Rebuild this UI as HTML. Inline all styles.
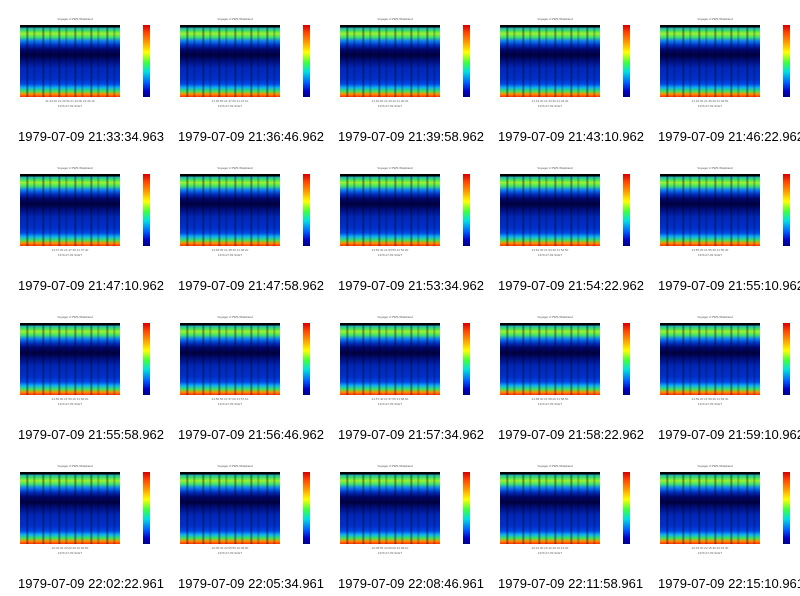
<!DOCTYPE html>
<html><head><meta charset="utf-8"><style>
body{margin:0;width:800px;height:596px;background:#fff;position:relative;overflow:hidden;font-family:"Liberation Sans",sans-serif}
.c{position:absolute;width:160px;height:149px}
.t{position:absolute;left:40px;top:17px;font-size:3px;color:#555;width:70px;text-align:center}
.p{position:absolute;left:20px;top:25px;width:100px;height:72px;
background:linear-gradient(to bottom,#000 0,#000 3%,#20b0c0 4%,#40e060 8%,#a0f030 12%,#40e070 17%,#1080f0 22%,#0030c0 28%,#000870 34%,#000040 42%,#001080 50%,#0028b8 60%,#0030c8 75%,#0048e8 82%,#10b0f0 87%,#40e060 92%,#ff9000 96%,#ff3000 100%)}
.s{position:absolute;inset:0;background:repeating-linear-gradient(to right,rgba(0,0,30,0) 0,rgba(0,0,30,0) 6px,rgba(0,0,30,.5) 7px,rgba(0,0,30,0) 9px,rgba(0,0,30,0) 13px,rgba(0,0,30,.3) 14px,rgba(0,0,30,0) 16px)}
.cb{position:absolute;left:143px;top:25px;width:7px;height:72px;background:linear-gradient(to bottom,#d00000 0,#ff4000 10%,#ffa000 25%,#ffff00 38%,#40ff40 52%,#00e0e0 65%,#0060ff 80%,#0000c0 92%,#000080 100%)}
.ax{position:absolute;left:20px;top:99px;width:100px;font-size:3px;color:#666;text-align:center;line-height:5px}
.cap{position:absolute;left:18px;top:128.5px;font-size:13px;color:#000;white-space:nowrap}
</style></head><body>
<div class="c" style="left:0;top:0"><div class="t">Voyager 2 PWS Wideband</div><div class="p"><div class="s"></div></div><div class="cb"></div><div class="ax">21:33:40 21:33:50 21:34:00 21:34:10<br>1979-07-09 SCET</div><div class="cap">1979-07-09 21:33:34.963</div></div>
<div class="c" style="left:160px;top:0"><div class="t">Voyager 2 PWS Wideband</div><div class="p"><div class="s"></div></div><div class="cb"></div><div class="ax">21:36:50 21:37:00 21:37:10<br>1979-07-09 SCET</div><div class="cap">1979-07-09 21:36:46.962</div></div>
<div class="c" style="left:320px;top:0"><div class="t">Voyager 2 PWS Wideband</div><div class="p"><div class="s"></div></div><div class="cb"></div><div class="ax">21:40:00 21:40:10 21:40:20<br>1979-07-09 SCET</div><div class="cap">1979-07-09 21:39:58.962</div></div>
<div class="c" style="left:480px;top:0"><div class="t">Voyager 2 PWS Wideband</div><div class="p"><div class="s"></div></div><div class="cb"></div><div class="ax">21:43:20 21:43:30 21:43:40<br>1979-07-09 SCET</div><div class="cap">1979-07-09 21:43:10.962</div></div>
<div class="c" style="left:640px;top:0"><div class="t">Voyager 2 PWS Wideband</div><div class="p"><div class="s"></div></div><div class="cb"></div><div class="ax">21:46:30 21:46:40 21:46:50<br>1979-07-09 SCET</div><div class="cap">1979-07-09 21:46:22.962</div></div>

<div class="c" style="left:0;top:149px"><div class="t">Voyager 2 PWS Wideband</div><div class="p"><div class="s"></div></div><div class="cb"></div><div class="ax">21:47:20 21:47:30 21:47:40<br>1979-07-09 SCET</div><div class="cap">1979-07-09 21:47:10.962</div></div>
<div class="c" style="left:160px;top:149px"><div class="t">Voyager 2 PWS Wideband</div><div class="p"><div class="s"></div></div><div class="cb"></div><div class="ax">21:48:00 21:48:10 21:48:20<br>1979-07-09 SCET</div><div class="cap">1979-07-09 21:47:58.962</div></div>
<div class="c" style="left:320px;top:149px"><div class="t">Voyager 2 PWS Wideband</div><div class="p"><div class="s"></div></div><div class="cb"></div><div class="ax">21:53:40 21:53:50 21:54:00<br>1979-07-09 SCET</div><div class="cap">1979-07-09 21:53:34.962</div></div>
<div class="c" style="left:480px;top:149px"><div class="t">Voyager 2 PWS Wideband</div><div class="p"><div class="s"></div></div><div class="cb"></div><div class="ax">21:54:30 21:54:40 21:54:50<br>1979-07-09 SCET</div><div class="cap">1979-07-09 21:54:22.962</div></div>
<div class="c" style="left:640px;top:149px"><div class="t">Voyager 2 PWS Wideband</div><div class="p"><div class="s"></div></div><div class="cb"></div><div class="ax">21:55:20 21:55:30 21:55:40<br>1979-07-09 SCET</div><div class="cap">1979-07-09 21:55:10.962</div></div>

<div class="c" style="left:0;top:298px"><div class="t">Voyager 2 PWS Wideband</div><div class="p"><div class="s"></div></div><div class="cb"></div><div class="ax">21:56:00 21:56:10 21:56:20<br>1979-07-09 SCET</div><div class="cap">1979-07-09 21:55:58.962</div></div>
<div class="c" style="left:160px;top:298px"><div class="t">Voyager 2 PWS Wideband</div><div class="p"><div class="s"></div></div><div class="cb"></div><div class="ax">21:56:50 21:57:00 21:57:10<br>1979-07-09 SCET</div><div class="cap">1979-07-09 21:56:46.962</div></div>
<div class="c" style="left:320px;top:298px"><div class="t">Voyager 2 PWS Wideband</div><div class="p"><div class="s"></div></div><div class="cb"></div><div class="ax">21:57:40 21:57:50 21:58:00<br>1979-07-09 SCET</div><div class="cap">1979-07-09 21:57:34.962</div></div>
<div class="c" style="left:480px;top:298px"><div class="t">Voyager 2 PWS Wideband</div><div class="p"><div class="s"></div></div><div class="cb"></div><div class="ax">21:58:30 21:58:40 21:58:50<br>1979-07-09 SCET</div><div class="cap">1979-07-09 21:58:22.962</div></div>
<div class="c" style="left:640px;top:298px"><div class="t">Voyager 2 PWS Wideband</div><div class="p"><div class="s"></div></div><div class="cb"></div><div class="ax">21:59:20 21:59:30 21:59:40<br>1979-07-09 SCET</div><div class="cap">1979-07-09 21:59:10.962</div></div>

<div class="c" style="left:0;top:447px"><div class="t">Voyager 2 PWS Wideband</div><div class="p"><div class="s"></div></div><div class="cb"></div><div class="ax">22:02:30 22:02:40 22:02:50<br>1979-07-09 SCET</div><div class="cap">1979-07-09 22:02:22.961</div></div>
<div class="c" style="left:160px;top:447px"><div class="t">Voyager 2 PWS Wideband</div><div class="p"><div class="s"></div></div><div class="cb"></div><div class="ax">22:05:40 22:05:50 22:06:00<br>1979-07-09 SCET</div><div class="cap">1979-07-09 22:05:34.961</div></div>
<div class="c" style="left:320px;top:447px"><div class="t">Voyager 2 PWS Wideband</div><div class="p"><div class="s"></div></div><div class="cb"></div><div class="ax">22:08:50 22:09:00 22:09:10<br>1979-07-09 SCET</div><div class="cap">1979-07-09 22:08:46.961</div></div>
<div class="c" style="left:480px;top:447px"><div class="t">Voyager 2 PWS Wideband</div><div class="p"><div class="s"></div></div><div class="cb"></div><div class="ax">22:12:00 22:12:10 22:12:20<br>1979-07-09 SCET</div><div class="cap">1979-07-09 22:11:58.961</div></div>
<div class="c" style="left:640px;top:447px"><div class="t">Voyager 2 PWS Wideband</div><div class="p"><div class="s"></div></div><div class="cb"></div><div class="ax">22:15:20 22:15:30 22:15:40<br>1979-07-09 SCET</div><div class="cap">1979-07-09 22:15:10.961</div></div>
</body></html>
